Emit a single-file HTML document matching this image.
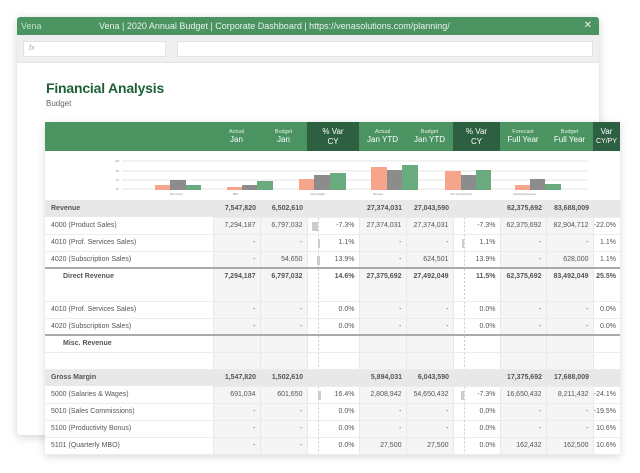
<!DOCTYPE html>
<html><head><meta charset="utf-8"><style>
*{margin:0;padding:0;box-sizing:border-box}
body{width:640px;height:473px;background:#fff;font-family:"Liberation Sans",sans-serif;position:relative;overflow:hidden}
.win{position:absolute;left:17px;top:17px;width:582px;height:418px;background:#fff;box-shadow:0 2px 10px rgba(0,0,0,.18);border-radius:3px}
.bar{height:18px;background:#4b9461;color:#e8f3ea;font-size:9px;line-height:18px;border-radius:3px 3px 0 0;position:relative}
.fb{height:28px;background:#efefef;position:relative;border-bottom:1px solid #e4e4e4}
.in{position:absolute;top:6px;height:16px;background:#fff;border:1px solid #e2e2e2}
h1{position:absolute;left:46px;top:80px;font-size:14px;letter-spacing:-0.2px;color:#1f5f36;font-weight:bold}
.sub{position:absolute;left:46px;top:99px;font-size:8px;color:#666}
.card{position:absolute;left:45px;top:122px;width:575px;height:333px;background:#fff;box-shadow:0 2px 8px rgba(0,0,0,.15)}
table{border-collapse:collapse;table-layout:fixed;width:575px;font-size:7px;color:#555}
td{height:17px;border-bottom:1px solid #ececec;text-align:right;padding-right:4px;white-space:nowrap;position:relative}
td.l{text-align:left;padding-left:6px;border-right:1px solid #e8e8e8}
td.n{background:#f5f5f5;border-right:1px solid #e8e8e8}
td.v{background:#fff;border-right:1px solid #e8e8e8;background-image:linear-gradient(#ccc 50%,transparent 50%);background-size:1px 4px;background-repeat:repeat-y;background-position:10px 0}
tr.g td{background:#e8e8e8;font-weight:bold;color:#555;border-right:none}
tr.t td{border-top:2px solid #aaa}
.hd{background:#4b9461;color:#fff;height:29px}
.hd div{font-size:5.5px;opacity:.85;text-align:center}
.hd span{display:block;font-size:8px;text-align:center;line-height:10px}
.hd td{text-align:center;padding:0;border:none;overflow:hidden}
.dk{background:#2d6040!important}
.mk{position:absolute;left:4px;top:4px;width:4px;height:9px;background:#ccc}
</style></head><body>
<div class="win">
<div class="bar"><span style="position:absolute;left:4px;color:#bfe0c8">Vena</span><span style="position:absolute;left:82px">Vena | 2020 Annual Budget | Corporate Dashboard | https://venasolutions.com/planning/</span><span style="position:absolute;right:7px;font-size:10px">✕</span></div>
<div class="fb"><div class="in" style="left:6px;width:143px;font-size:7px;color:#aaa;font-style:italic;padding-left:5px;line-height:14px">fx</div><div class="in" style="left:160px;width:416px"></div></div>
</div>
<h1>Financial Analysis</h1>
<div class="sub">Budget</div>
<div class="card">
<table>
<colgroup><col style="width:168px"><col style="width:47px"><col style="width:47px"><col style="width:52px"><col style="width:47px"><col style="width:47px"><col style="width:47px"><col style="width:46px"><col style="width:47px"><col style="width:27px"></colgroup>
<tr class="hd"><td></td><td><div>Actual</div><span>Jan</span></td><td><div>Budget</div><span>Jan</span></td><td class="dk"><span>% Var</span><span>CY</span></td><td><div>Actual</div><span>Jan YTD</span></td><td><div>Budget</div><span>Jan YTD</span></td><td class="dk"><span>% Var</span><span>CY</span></td><td><div>Forecast</div><span>Full Year</span></td><td><div>Budget</div><span>Full Year</span></td><td class="dk"><span>Var</span><span style="font-size:7px">CY/PY</span></td></tr>
<tr><td colspan="10" style="height:49px;padding:0;border:none">
<svg width="575" height="49" style="display:block">
<g stroke="#e6e6e6" stroke-width="1"><line x1="77" y1="10" x2="543" y2="10"/><line x1="77" y1="20" x2="543" y2="20"/><line x1="77" y1="29" x2="543" y2="29"/><line x1="77" y1="38" x2="543" y2="38"/></g>
<g font-size="2.5" fill="#888"><text x="70" y="11">100</text><text x="71" y="21">80</text><text x="71" y="30">40</text><text x="71" y="39">20</text>
<text x="125" y="44">Net Income</text><text x="188" y="44">EBIT</text><text x="265" y="44">Gross Margin</text><text x="328" y="44">Revenue</text><text x="405" y="44">Cost of Goods Sold</text><text x="468" y="44">Operating Expenses</text></g>
<g fill="#f7a58a"><rect x="110" y="34" width="15" height="5"/><rect x="182" y="36" width="15" height="3"/><rect x="254" y="28" width="15" height="11"/><rect x="326" y="16" width="16" height="23"/><rect x="400" y="20" width="16" height="19"/><rect x="470" y="34" width="15" height="5"/></g>
<g fill="#8c8c8c"><rect x="125" y="29" width="16" height="10"/><rect x="197" y="34" width="15" height="5"/><rect x="269" y="24" width="16" height="15"/><rect x="342" y="19" width="15" height="20"/><rect x="416" y="24" width="15" height="15"/><rect x="485" y="28" width="15" height="11"/></g>
<g fill="#6aaa7f"><rect x="141" y="34" width="15" height="5"/><rect x="212" y="30" width="16" height="9"/><rect x="285" y="22" width="16" height="17"/><rect x="357" y="14" width="16" height="25"/><rect x="431" y="19" width="15" height="20"/><rect x="500" y="33" width="16" height="6"/></g>
</svg></td></tr>
<tr class="g"><td class="l" style="border:none">Revenue</td><td>7,547,820</td><td>6,502,610</td><td></td><td>27,374,031</td><td>27,043,590</td><td></td><td>62,375,692</td><td>83,688,009</td><td></td></tr>
<tr><td class="l">4000 (Product Sales)</td><td class="n">7,294,187</td><td class="n">6,797,032</td><td class="v"><i class="mk" style="width:6px"></i>-7.3%</td><td class="n">27,374,031</td><td class="n">27,374,031</td><td class="v">-7.3%</td><td class="n">62,375,692</td><td class="n">82,904,712</td><td>-22.0%</td></tr>
<tr><td class="l">4010 (Prof. Services Sales)</td><td class="n">-</td><td class="n">-</td><td class="v"><i class="mk" style="left:10px;width:2px"></i>1.1%</td><td class="n">-</td><td class="n">-</td><td class="v"><i class="mk" style="left:8px;width:2px"></i>1.1%</td><td class="n">-</td><td class="n">-</td><td>1.1%</td></tr>
<tr><td class="l">4020 (Subscription Sales)</td><td class="n">-</td><td class="n">54,650</td><td class="v"><i class="mk" style="left:9px;width:3px"></i>13.9%</td><td class="n">-</td><td class="n">624,501</td><td class="v">13.9%</td><td class="n">-</td><td class="n">628,000</td><td>1.1%</td></tr>
<tr class="t"><td class="l" style="height:33px;vertical-align:top;padding:4px 0 0 18px;font-weight:bold">Direct Revenue</td><td class="n" style="vertical-align:top;padding-top:4px;font-weight:bold">7,294,187</td><td class="n" style="vertical-align:top;padding-top:4px;font-weight:bold">6,797,032</td><td class="v" style="vertical-align:top;padding-top:4px;font-weight:bold">14.6%</td><td class="n" style="vertical-align:top;padding-top:4px;font-weight:bold">27,375,692</td><td class="n" style="vertical-align:top;padding-top:4px;font-weight:bold">27,492,049</td><td class="v" style="vertical-align:top;padding-top:4px;font-weight:bold">11.5%</td><td class="n" style="vertical-align:top;padding-top:4px;font-weight:bold">62,375,692</td><td class="n" style="vertical-align:top;padding-top:4px;font-weight:bold">83,492,049</td><td style="vertical-align:top;padding-top:4px;font-weight:bold">25.5%</td></tr>
<tr><td class="l">4010 (Prof. Services Sales)</td><td class="n">-</td><td class="n">-</td><td class="v">0.0%</td><td class="n">-</td><td class="n">-</td><td class="v">0.0%</td><td class="n">-</td><td class="n">-</td><td>0.0%</td></tr>
<tr><td class="l">4020 (Subscription Sales)</td><td class="n">-</td><td class="n">-</td><td class="v">0.0%</td><td class="n">-</td><td class="n">-</td><td class="v">0.0%</td><td class="n">-</td><td class="n">-</td><td>0.0%</td></tr>
<tr class="t"><td class="l" style="padding-left:18px;font-weight:bold">Misc. Revenue</td><td class="n"></td><td class="n"></td><td class="v"></td><td class="n"></td><td class="n"></td><td class="v"></td><td class="n"></td><td class="n"></td><td></td></tr>
<tr><td class="l"></td><td class="n"></td><td class="n"></td><td class="v"></td><td class="n"></td><td class="n"></td><td class="v"></td><td class="n"></td><td class="n"></td><td></td></tr>
<tr class="g"><td class="l" style="border:none">Gross Margin</td><td>1,547,820</td><td>1,502,610</td><td></td><td>5,894,031</td><td>6,043,590</td><td></td><td>17,375,692</td><td>17,688,009</td><td></td></tr>
<tr><td class="l">5000 (Salaries &amp; Wages)</td><td class="n">691,034</td><td class="n">601,650</td><td class="v"><i class="mk" style="left:10px;width:3px"></i>16.4%</td><td class="n">2,808,942</td><td class="n">54,650,432</td><td class="v"><i class="mk" style="left:7px;width:3px"></i>-7.3%</td><td class="n">16,650,432</td><td class="n">8,211,432</td><td>-24.1%</td></tr>
<tr><td class="l">5010 (Sales Commissions)</td><td class="n">-</td><td class="n">-</td><td class="v">0.0%</td><td class="n">-</td><td class="n">-</td><td class="v">0.0%</td><td class="n">-</td><td class="n">-</td><td>-19.5%</td></tr>
<tr><td class="l">5100 (Productivity Bonus)</td><td class="n">-</td><td class="n">-</td><td class="v">0.0%</td><td class="n">-</td><td class="n">-</td><td class="v">0.0%</td><td class="n">-</td><td class="n">-</td><td>10.6%</td></tr>
<tr><td class="l">5101 (Quarterly MBO)</td><td class="n">-</td><td class="n">-</td><td class="v">0.0%</td><td class="n">27,500</td><td class="n">27,500</td><td class="v">0.0%</td><td class="n">162,432</td><td class="n">162,500</td><td>10.6%</td></tr>
</table>
</div>
</body></html>
